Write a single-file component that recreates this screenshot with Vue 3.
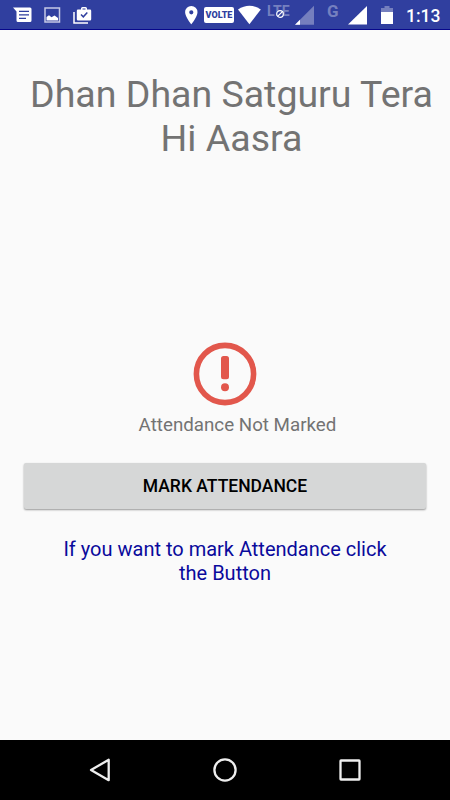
<template>
  <div class="screen">
    <!-- Status bar -->
    <header class="status-bar">
      <svg class="icon messages" width="19" height="30" viewBox="0 0 19 30">
        <path d="M0 7.500h17q1.500 0 1.500 1.500v11.500q0 1.500-1.500 1.500h-12q-1.500 0-1.500-1.500v-9z" fill="#fff" />
        <path d="M6 11.300h10M6 14.800h10M6 18.300h7" stroke="#303f9f" stroke-width="1.300" />
      </svg>
      <svg class="icon picture" width="17" height="30" viewBox="0 0 17 30">
        <rect x="1" y="8" width="14.500" height="14" fill="none" stroke="#c5c9e6" stroke-width="1.500" />
        <path d="M2.500 20.500v-3.500l2.500-1.800 2.500 2 3-1.700 3.500 2.500v2.500z" fill="#fff" />
      </svg>
      <svg class="icon shop" width="19" height="30" viewBox="0 0 19 30">
        <path d="M1 12v11h14" fill="none" stroke="#fff" stroke-width="1.500" />
        <path d="M8 9.500v-1q0-1.500 1.500-1.500h3q1.500 0 1.500 1.500v1h3q1.200 0 1.200 1.200v8.600q0 1.200-1.200 1.200h-12q-1.200 0-1.200-1.200v-8.600q0-1.200 1.200-1.200zm1.500 0h3v-1h-3z" fill="#fff" fill-rule="evenodd" />
        <path d="M8 14.500l2.300 2.300 4-4.300" fill="none" stroke="#303f9f" stroke-width="1.500" />
      </svg>
      <svg class="icon pin" width="13" height="30" viewBox="0 0 13 30">
        <path d="M6.300 6a6.200 6.200 0 0 0-6.200 6.200c0 4.600 6.200 12 6.200 12s6.200-7.400 6.200-12a6.200 6.200 0 0 0-6.200-6.200zm0 4.200a2.100 2.100 0 1 1 0 4.200 2.100 2.100 0 0 1 0-4.200z" fill="#fff" />
      </svg>
      <span class="volte">VOLTE</span>
      <svg class="icon wifi" width="23" height="30" viewBox="0 0 23 30">
        <path d="M0 9.500q11.400-7.500 22.800 0l-11.400 14.700z" fill="#fff" />
      </svg>
      <span class="lte">
        LTE
        <svg class="no-data" width="10" height="10" viewBox="0 0 10 10">
          <circle cx="5" cy="5" r="3.300" fill="#303f9f" stroke="#fff" stroke-width="1.200" />
          <path d="M2.900 7.100l4.200-4.200" stroke="#fff" stroke-width="1.200" />
        </svg>
      </span>
      <svg class="icon signal-low" width="19" height="30" viewBox="0 0 19 30">
        <path d="M0 24.800l19-19v19z" fill="#757fbe" />
        <path d="M0 24.800l5-5v5z" fill="#fff" />
      </svg>
      <span class="network">G</span>
      <svg class="icon signal" width="19" height="30" viewBox="0 0 19 30">
        <path d="M0 24.500l19-18.500v18.500z" fill="#fff" />
      </svg>
      <svg class="icon battery" width="12" height="30" viewBox="0 0 12 30">
        <path d="M0 12v-4h3.500v-2h5v2h3.500v4z" fill="#757fbe" />
        <path d="M0 12h12v12h-12z" fill="#fff" />
      </svg>
      <span class="time">1:13</span>
    </header>

    <main class="content">
      <h1 class="title">Dhan Dhan Satguru Tera Hi Aasra</h1>
      <div class="status">
        <svg class="alert" width="64" height="64" viewBox="0 0 64 64">
          <circle cx="32" cy="32" r="28.600" fill="none" stroke="#e2574c" stroke-width="5.600" />
          <rect x="28" y="14" width="8" height="23.300" rx="2.500" fill="#e2574c" />
          <circle cx="32" cy="45.300" r="4" fill="#e2574c" />
        </svg>
        <p class="status-text">Attendance Not Marked</p>
      </div>
      <button class="mark-button" type="button">MARK ATTENDANCE</button>
      <p class="hint">If you want to mark Attendance click the Button</p>
    </main>

    <!-- Navigation bar -->
    <nav class="nav-bar">
      <svg width="26" height="26" viewBox="0 0 26 26">
        <path d="M21.700 2.800v20.400l-17.700-10.200z" />
      </svg>
      <svg width="26" height="26" viewBox="0 0 26 26">
        <circle cx="13" cy="13" r="10.600" />
      </svg>
      <svg width="26" height="26" viewBox="0 0 26 26">
        <rect x="3.500" y="3.500" width="19" height="19" rx="0.500" />
      </svg>
    </nav>
  </div>
</template>

<script setup>
</script>

<style>
body {
  margin: 0;
}
</style>

<style scoped>
.screen {
  display: flex;
  flex-direction: column;
  width: 450px;
  height: 800px;
  overflow: hidden;
  background: #fafafa;
  font-family: Roboto, sans-serif;
}

.status-bar {
  display: flex;
  flex: none;
  box-sizing: border-box;
  height: 30px;
  padding-left: 13px;
  overflow: hidden;
  background: #303f9f;
  border-bottom: 1px solid #07078b;
  color: #fff;
}

.icon {
  flex: none;
}

.picture {
  margin-left: 12px;
}

.shop {
  margin-left: 12px;
}

.pin {
  margin-left: 93px;
}

.volte {
  width: 30px;
  height: 16px;
  margin: 7px 0 0 6px;
  border-radius: 2px;
  background: #fff;
  color: #303f9f;
  font-size: 9px;
  font-weight: 900;
  line-height: 16px;
  text-align: center;
}

.wifi {
  margin-left: 4px;
}

.lte {
  position: relative;
  width: 23px;
  margin: 4px 0 0 6px;
  color: #7580bf;
  font-size: 14px;
  font-weight: 700;
  line-height: 14px;
}

.no-data {
  position: absolute;
  left: 8px;
  top: 5px;
}

.signal-low {
  margin-left: 5px;
}

.network {
  width: 12px;
  margin: 2px 0 0 13px;
  color: #7580bf;
  font-size: 17px;
  font-weight: 700;
  line-height: 18px;
}

.signal {
  margin-left: 9px;
}

.battery {
  margin-left: 14px;
}

.time {
  margin-left: 13px;
  font-size: 17.5px;
  font-weight: 500;
  line-height: 32px;
}

.content {
  display: flex;
  flex: 1;
  flex-direction: column;
  padding: 42px 24px 0;
}

.title {
  height: 88px;
  margin: 0 -13px 0 0;
  color: #737373;
  font-size: 37.5px;
  font-weight: 400;
  line-height: 44px;
  text-align: center;
}

.status {
  display: flex;
  flex-direction: column;
  align-items: center;
  margin-top: 182px;
}

.status-text {
  margin: 7px 0 0 25px;
  color: #737373;
  font-size: 18.75px;
  line-height: 24px;
}

.mark-button {
  height: 46px;
  margin: 26px 0 0;
  padding: 0;
  border: 0;
  border-radius: 2px;
  background: #d6d7d7;
  box-shadow: 0 1px 2px rgba(0, 0, 0, 0.4);
  color: #000;
  font-family: inherit;
  font-size: 17.5px;
  font-weight: 500;
}

.hint {
  margin: 28px 30px 0;
  color: #0a0a9c;
  font-size: 20px;
  line-height: 24px;
  text-align: center;
}

.nav-bar {
  display: flex;
  flex: none;
  align-items: center;
  justify-content: center;
  gap: 99px;
  height: 60px;
  background: #000;
}

.nav-bar svg {
  fill: none;
  stroke: #eee;
  stroke-width: 2.3;
  stroke-linejoin: round;
}
</style>
